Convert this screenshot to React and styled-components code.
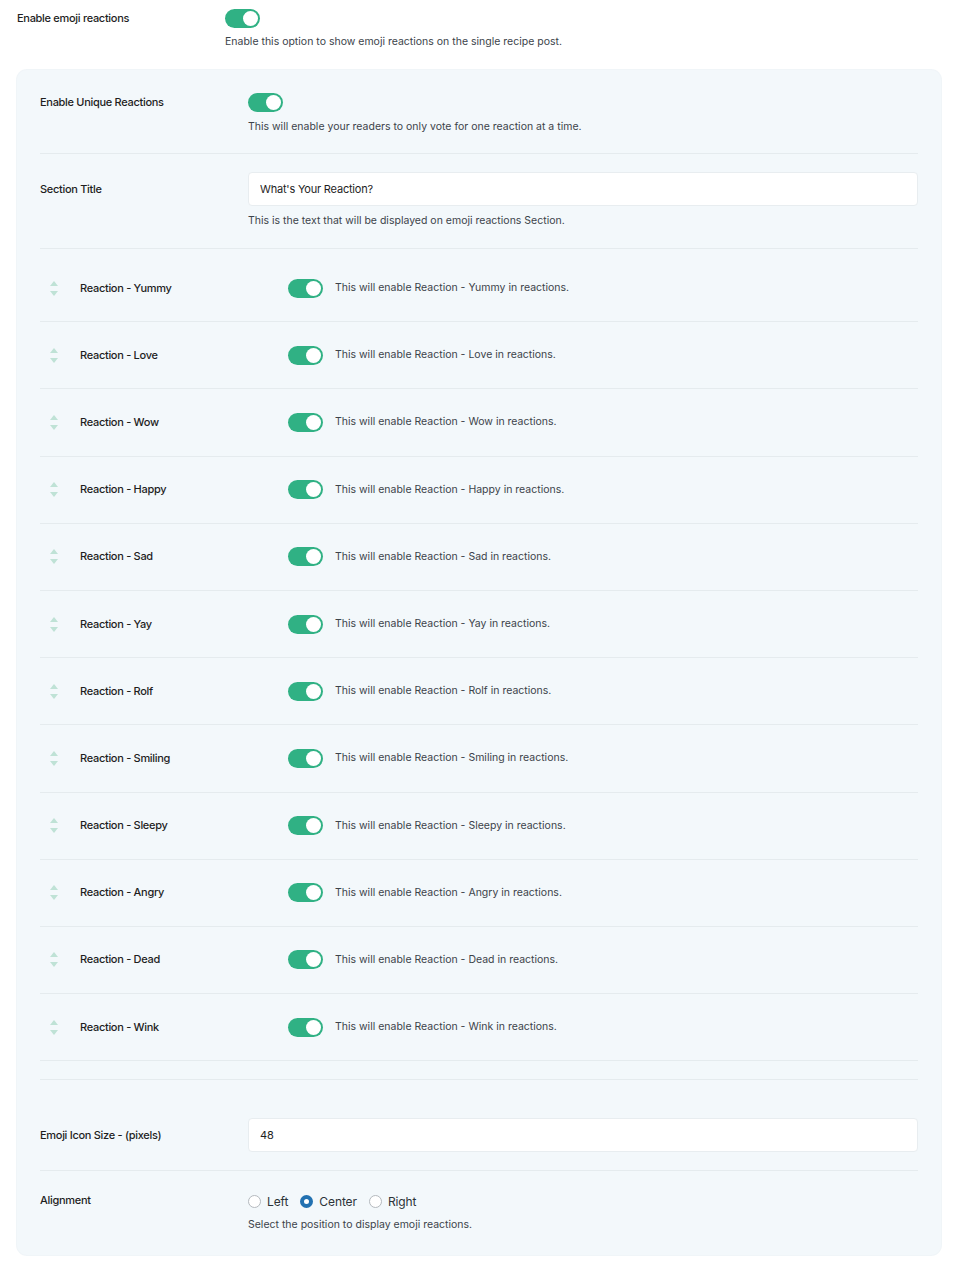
import React from 'react';
import styled, { createGlobalStyle } from 'styled-components';

const GlobalStyle = createGlobalStyle`
  body {
    margin: 0;
    background: #fff;
    font-family: Inter, "Noto Sans", sans-serif;
    color: #1e1e1e;
  }
  * { box-sizing: border-box; }
`

const Page = styled.div`
  padding: 9px 13px 24px 17px;
`

const Row = styled.div`
  display: grid;
  grid-template-columns: 208px 1fr;
  align-items: start;
  padding: ${p => p.$pad || '19px 0 18px'};
  border-bottom: ${p => p.$noBorder ? 'none' : '1px solid #e5ebee'};
`

const Label = styled.div`
  font-size: 11px;
  font-weight: 500;
  letter-spacing: -0.3px;
  line-height: ${p => p.$lh || 19}px;
  color: #1e1e1e;
`

const Control = styled.div`
  display: flex;
  flex-direction: column;
  gap: ${p => p.$gap ?? 5}px;
`

const Desc = styled.div`
  font-size: 10.5px;
  line-height: 18px;
  color: #3c434a;
`

const Track = styled.span`
  display: inline-block;
  position: relative;
  width: 35px;
  height: 19px;
  border-radius: 10px;
  background: ${p => p.$on ? '#30b184' : '#c3c4c7'};
  flex-shrink: 0;

  &::after {
    content: '';
    position: absolute;
    top: 2px;
    left: ${p => p.$on ? '18px' : '2px'};
    width: 15px;
    height: 15px;
    border-radius: 50%;
    background: #fff;
  }
`

const Panel = styled.div`
  margin-top: 19px;
  background: #f3f8fb;
  border-radius: 10px;
  padding: 4px 23px 21px;
  box-shadow: 0 0 0 1px rgba(230, 238, 243, 0.6);
`

const TextInput = styled.input`
  width: 100%;
  height: 34px;
  padding: 0 11px;
  border: 1px solid #e8edf0;
  border-radius: 4px;
  background: #fff;
  font-family: inherit;
  font-size: 11px;
  letter-spacing: -0.2px;
  color: #1e1e1e;
  outline: none;
`

const SortList = styled.div`
  padding: 6px 0 18px;
  border-bottom: 1px solid #e5ebee;
`

const ReactionRow = styled.div`
  display: grid;
  grid-template-columns: 40px 208px 1fr;
  align-items: center;
  height: 67.2px;
  border-bottom: 1px solid #e5ebee;
`

const Handle = styled.div`
  display: flex;
  flex-direction: column;
  align-items: center;
  gap: 5px;
  width: 28px;
`

const Arrow = styled.span`
  width: 0;
  height: 0;
  border-left: 4.5px solid transparent;
  border-right: 4.5px solid transparent;
  ${p => p.$down
    ? 'border-top: 5px solid #bfe2d6;'
    : 'border-bottom: 5px solid #bfe2d6;'}
`

const Inline = styled.div`
  display: flex;
  align-items: center;
  gap: 12px;
`

const RadioGroup = styled.div`
  display: flex;
  align-items: center;
  height: 22px;
  gap: 12px;
`

const RadioOption = styled.label`
  display: flex;
  align-items: center;
  gap: 6px;
  font-size: 12px;
  letter-spacing: -0.1px;
  color: #2c3338;
`

const RadioDot = styled.span`
  width: 13px;
  height: 13px;
  border-radius: 50%;
  border: ${p => p.$checked ? '4px solid #2271b1' : '1px solid #b4b9be'};
  background: #fff;
  box-sizing: border-box;
`

const reactions = ['Yummy', 'Love', 'Wow', 'Happy', 'Sad', 'Yay', 'Rolf', 'Smiling', 'Sleepy', 'Angry', 'Dead', 'Wink'];

const App = () => {
  return (
    <Page>
      <GlobalStyle />
      <Row $pad="0" $noBorder>
        <Label>Enable emoji reactions</Label>
        <Control>
          <Track $on />
          <Desc>Enable this option to show emoji reactions on the single recipe post.</Desc>
        </Control>
      </Row>

      <Panel>
        <Row $pad="19px 0 17px">
          <Label>Enable Unique Reactions</Label>
          <Control $gap={6}>
            <Track $on />
            <Desc>This will enable your readers to only vote for one reaction at a time.</Desc>
          </Control>
        </Row>

        <Row $pad="18px 0 18px">
          <Label $lh={34}>Section Title</Label>
          <Control $gap={6}>
            <TextInput defaultValue="What's Your Reaction?" />
            <Desc>This is the text that will be displayed on emoji reactions Section.</Desc>
          </Control>
        </Row>

        <SortList>
          {reactions.map(name => (
            <ReactionRow key={name}>
              <Handle>
                <Arrow />
                <Arrow $down />
              </Handle>
              <Label>Reaction - {name}</Label>
              <Inline>
                <Track $on />
                <Desc>This will enable Reaction - {name} in reactions.</Desc>
              </Inline>
            </ReactionRow>
          ))}
        </SortList>

        <Row $pad="38px 0 18px">
          <Label $lh={34}>Emoji Icon Size - (pixels)</Label>
          <Control>
            <TextInput defaultValue="48" />
          </Control>
        </Row>

        <Row $pad="19px 0 0" $noBorder>
          <Label $lh={20}>Alignment</Label>
          <Control $gap={4}>
            <RadioGroup>
              <RadioOption><RadioDot />Left</RadioOption>
              <RadioOption><RadioDot $checked />Center</RadioOption>
              <RadioOption><RadioDot />Right</RadioOption>
            </RadioGroup>
            <Desc>Select the position to display emoji reactions.</Desc>
          </Control>
        </Row>
      </Panel>
    </Page>
  )
}
export default App;
